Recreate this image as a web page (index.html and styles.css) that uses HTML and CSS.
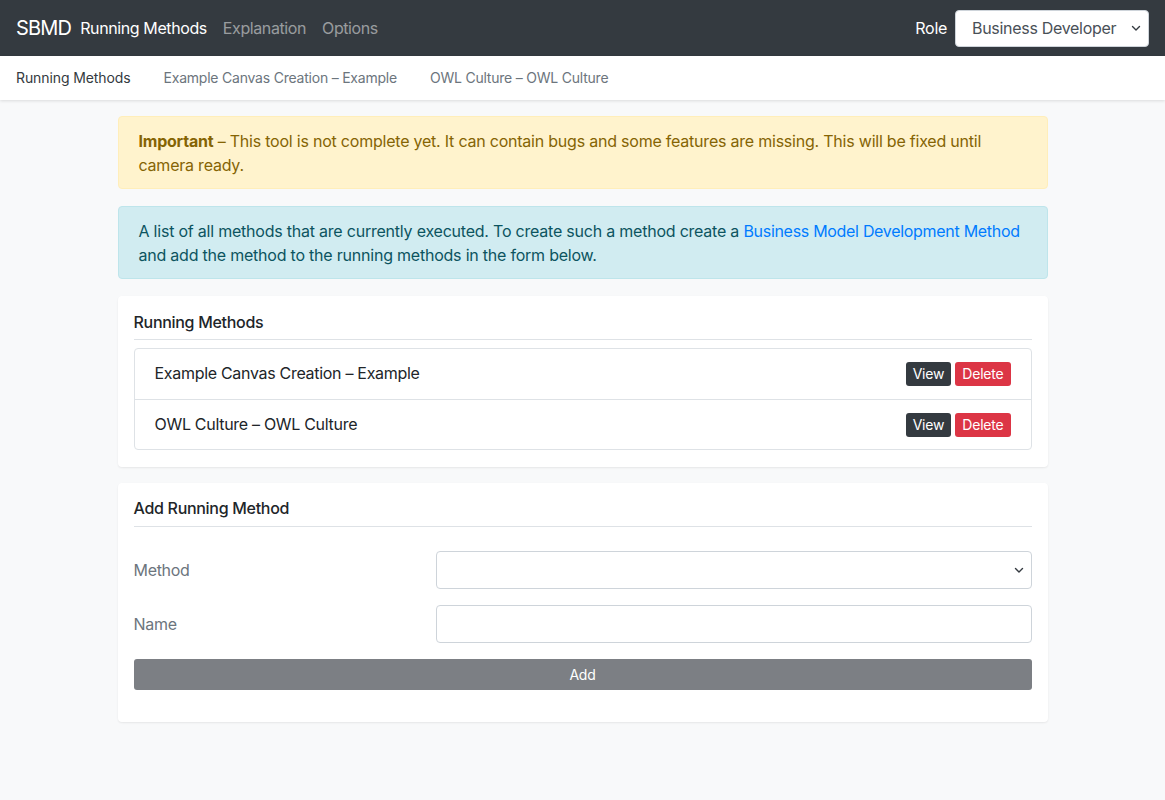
FILE: index.html
```html
<!DOCTYPE html>
<html lang="en">
<head>
<meta charset="utf-8">
<title>SBMD – Running Methods</title>
<link rel="stylesheet" href="styles.css">
</head>
<body>
<nav class="navbar">
  <div class="nav-left">
    <span class="brand">SBMD</span>
    <a class="nav-link active">Running Methods</a>
    <a class="nav-link">Explanation</a>
    <a class="nav-link">Options</a>
  </div>
  <div class="nav-right">
    <span class="role-label">Role</span>
    <div class="select-wrap role-select">
      <div class="select-box">Business Developer</div>
      <svg class="chev" width="10" height="8" viewBox="0 0 10 8"><path d="M1.5 2.5 L5 6 L8.5 2.5" fill="none" stroke="#343a40" stroke-width="1.4" stroke-linecap="round" stroke-linejoin="round"/></svg>
    </div>
  </div>
</nav>
<div class="subnav">
  <a class="sub-link active">Running Methods</a>
  <a class="sub-link">Example Canvas Creation – Example</a>
  <a class="sub-link">OWL Culture – OWL Culture</a>
</div>
<main class="container">
  <div class="alert alert-warning"><strong>Important</strong> – This tool is not complete yet. It can contain bugs and some features are missing. This will be fixed until camera ready.</div>
  <div class="alert alert-info">A list of all methods that are currently executed. To create such a method create a <a class="link">Business Model Development Method</a> and add the method to the running methods in the form below.</div>
  <section class="card card-list">
    <h5 class="card-title">Running Methods</h5>
    <ul class="list-group">
      <li class="list-item"><span>Example Canvas Creation – Example</span><span class="btns"><button class="btn btn-dark">View</button><button class="btn btn-danger">Delete</button></span></li>
      <li class="list-item"><span>OWL Culture – OWL Culture</span><span class="btns"><button class="btn btn-dark">View</button><button class="btn btn-danger">Delete</button></span></li>
    </ul>
  </section>
  <section class="card card-form">
    <h5 class="card-title">Add Running Method</h5>
    <div class="form">
      <div class="form-row">
        <label class="form-label">Method</label>
        <div class="select-wrap form-field">
          <div class="select-box"></div>
          <svg class="chev" width="10" height="8" viewBox="0 0 10 8"><path d="M1.5 2.5 L5 6 L8.5 2.5" fill="none" stroke="#343a40" stroke-width="1.4" stroke-linecap="round" stroke-linejoin="round"/></svg>
        </div>
      </div>
      <div class="form-row">
        <label class="form-label">Name</label>
        <div class="input-box form-field"></div>
      </div>
      <button class="btn-add">Add</button>
    </div>
  </section>
</main>
</body>
</html>
```
FILE: styles.css
```css
* { box-sizing: border-box; }
html, body { margin: 0; padding: 0; }
body {
  font-family: "Inter", "Liberation Sans", sans-serif;
  font-size: 16px;
  line-height: 24px;
  color: #212529;
  background: #f8f9fa;
  min-height: 800px;
}
.navbar {
  height: 56px;
  background: #343a40;
  display: flex;
  align-items: center;
  justify-content: space-between;
  padding: 0 16px;
}
.nav-left { display: flex; align-items: center; }
.brand { color: #fff; font-size: 20px; margin-right: 9px; letter-spacing: -0.8px; }
.nav-link { color: rgba(255,255,255,0.5); font-size: 16px; margin-right: 16px; letter-spacing: -0.4px; }
.nav-link.active { color: #fff; }
.nav-right { display: flex; align-items: center; }
.role-label { color: #fff; font-size: 16px; margin-right: 8px; letter-spacing: -0.3px; }
.select-wrap { position: relative; }
.select-box {
  height: 38px;
  border: 1px solid #ced4da;
  border-radius: 4px;
  background: #fff;
  color: #495057;
  font-size: 16px;
  line-height: 36px;
  padding: 0 28px 0 16px;
  letter-spacing: -0.3px;
  white-space: nowrap;
}
.role-select .select-box { width: 194px; height: 37px; line-height: 35px; }
.chev { position: absolute; right: 8px; top: 50%; margin-top: -4px; }
.subnav {
  height: 44px;
  background: #fff;
  display: flex;
  align-items: center;
  padding: 0 16px;
  gap: 33px;
  box-shadow: 0 1px 3px rgba(0,0,0,0.12);
}
.sub-link { font-size: 14px; color: #6c757d; letter-spacing: -0.22px; }
.sub-link.active { color: #343a40; letter-spacing: -0.1px; }
.container {
  width: 930px;
  margin: 16px auto 0;
}
.alert {
  border: 1px solid transparent;
  border-radius: 4px;
  padding: 12px 20px 11px;
  margin-bottom: 17px;
  letter-spacing: -0.22px;
}
.alert strong { font-weight: 700; }
.alert-warning { background: #fff3cd; border-color: #ffeeba; color: #856404; }
.alert-info { background: #d1ecf1; border-color: #bee5eb; color: #0c5460; }
.alert-info .link { letter-spacing: -0.3px; }
.link { color: #007bff; }
.card {
  background: #fff;
  border-radius: 4px;
  box-shadow: 0 1px 2px rgba(0,0,0,0.075);
  padding: 16px;
  margin-bottom: 17px;
}
.card-list { padding-bottom: 17px; margin-bottom: 16px; }
.card-title {
  margin: 0 0 8px;
  font-size: 16px;
  font-weight: 500;
  line-height: 20px;
  padding-bottom: 7px;
  border-bottom: 1px solid #dee2e6;
  letter-spacing: -0.3px;
}
.card-form .card-title { line-height: 18px; padding-bottom: 9px; }
.list-group {
  list-style: none;
  margin: 0;
  padding: 0;
  border: 1px solid #dee2e6;
  border-radius: 4px;
}
.list-item {
  display: flex;
  justify-content: space-between;
  align-items: center;
  padding: 11px 20px 13px;
  height: 50px;
  letter-spacing: -0.3px;
}
.list-item + .list-item { border-top: 1px solid #dee2e6; }
.btns { display: flex; gap: 4px; margin-top: 2px; }
.btn {
  font-family: inherit;
  border: none;
  border-radius: 3px;
  color: #fff;
  font-size: 14px;
  height: 24px;
  line-height: 24px;
  padding: 0 7px;
  letter-spacing: -0.2px;
}
.btn-dark { background: #343a40; }
.btn-danger { background: #dc3545; }
.form { padding-top: 16px; }
.form-row { display: flex; align-items: center; margin-bottom: 16px; }
.form-label { width: 302px; color: #6c757d; letter-spacing: -0.3px; }
.form-field { flex: 1; }
.input-box {
  height: 38px;
  border: 1px solid #ced4da;
  border-radius: 4px;
  background: #fff;
}
.btn-add {
  display: block;
  width: 100%;
  height: 31px;
  border: none;
  border-radius: 3px;
  background: #7c7f84;
  color: #fff;
  font-family: inherit;
  font-size: 14px;
  margin-bottom: 16px;
  letter-spacing: -0.2px;
}
```
